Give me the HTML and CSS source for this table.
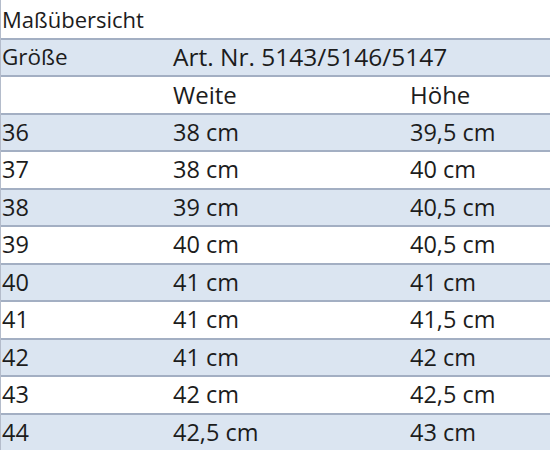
FILE: index.html
```html
<!DOCTYPE html>
<html lang="de">
<head>
<meta charset="utf-8">
<title>Maßübersicht</title>
<link rel="stylesheet" href="styles.css">
</head>
<body>
<div class="sheet">
  <div class="row title"><div class="c1">Maßübersicht</div></div>
  <div class="row band head"><div class="c1">Größe</div><div class="c2 span art">Art. Nr. 5143/5146/5147</div></div>
  <div class="row head"><div class="c1"></div><div class="c2">Weite</div><div class="c3">Höhe</div></div>
  <div class="row band"><div class="c1">36</div><div class="c2">38 cm</div><div class="c3">39,5 cm</div></div>
  <div class="row"><div class="c1">37</div><div class="c2">38 cm</div><div class="c3">40 cm</div></div>
  <div class="row band"><div class="c1">38</div><div class="c2">39 cm</div><div class="c3">40,5 cm</div></div>
  <div class="row"><div class="c1">39</div><div class="c2">40 cm</div><div class="c3">40,5 cm</div></div>
  <div class="row band"><div class="c1">40</div><div class="c2">41 cm</div><div class="c3">41 cm</div></div>
  <div class="row"><div class="c1">41</div><div class="c2">41 cm</div><div class="c3">41,5 cm</div></div>
  <div class="row band"><div class="c1">42</div><div class="c2">41 cm</div><div class="c3">42 cm</div></div>
  <div class="row"><div class="c1">43</div><div class="c2">42 cm</div><div class="c3">42,5 cm</div></div>
  <div class="row band"><div class="c1">44</div><div class="c2">42,5 cm</div><div class="c3">43 cm</div></div>
</div>
</body>
</html>
```
FILE: styles.css
```css
html, body {
  margin: 0;
  padding: 0;
  background: #ffffff;
}
.sheet {
  width: 550px;
  height: 450px;
  overflow: hidden;
  border-left: 1px solid #b4bccb;
  box-sizing: border-box;
  font-family: "Open Sans", "Noto Sans", sans-serif;
  font-size: 23.5px;
  color: #1c1c1c;
}
.row {
  display: grid;
  grid-template-columns: 171px 237px 1fr;
  align-items: center;
  height: 37.5px;
  box-sizing: border-box;
  border-top: 2px solid #a3afc3;
  padding-left: 1px;
}
.row.title {
  border-top: none;
  font-size: 22px;
}
.head {
  font-size: 24px;
}
.head .c1 {
  font-size: 22.5px;
}
.art {
  font-size: 24.5px;
}
.band {
  background: #dbe5f1;
}
.c1, .c2, .c3 {
  white-space: nowrap;
  line-height: 1;
}
.span {
  grid-column: 2 / 4;
}
```
